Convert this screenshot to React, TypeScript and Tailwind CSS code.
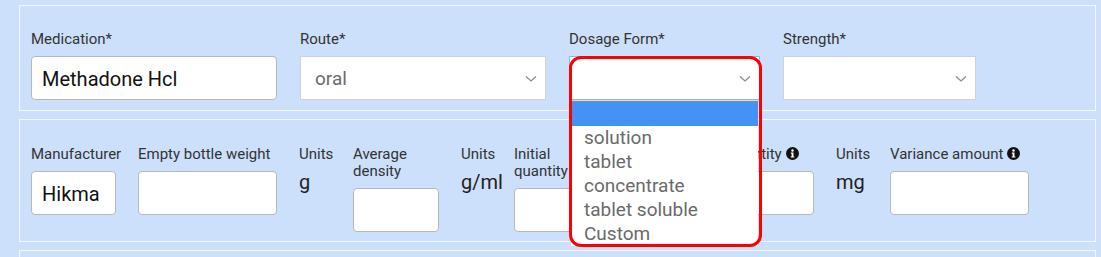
import React from "react";

const font = { fontFamily: "Roboto, 'Noto Sans', Arial, sans-serif" };

function Chevron() {
  return (
    <svg width="12" height="8" viewBox="0 0 12 8" className="shrink-0">
      <path d="M1 1.5 L6 6 L11 1.5" fill="none" stroke="#8a8a8a" strokeWidth="1.2" />
    </svg>
  );
}

function Info() {
  return (
    <svg width="13" height="13" viewBox="0 0 16 16" className="inline-block ml-[4px] align-[-1px]">
      <circle cx="8" cy="8" r="8" fill="#111" />
      <circle cx="8" cy="4.3" r="1.5" fill="#fff" />
      <path d="M6 6.8 H9.2 V11.6 H10.3 V13 H5.8 V11.6 H6.9 V8.2 H6 Z" fill="#fff" />
    </svg>
  );
}

function Label({ children, w }: { children: React.ReactNode; w?: string }) {
  return (
    <div className={`text-[15px] leading-[17px] text-[#333] mb-[8px] whitespace-nowrap ${w ?? ""}`}>{children}</div>
  );
}

function TextInput({ value, w }: { value?: string; w: string }) {
  return (
    <div
      className={`h-[44px] ${w} bg-white border border-[#b8b8b8] rounded-[4px] flex items-center pl-[10px] pt-[2px] text-[20px] text-[#111]`}
    >
      {value}
    </div>
  );
}

function Select({ value, w, focused }: { value?: string; w: string; focused?: boolean }) {
  return (
    <div
      className={`h-[44px] ${w} bg-white border ${
        focused ? "border-[#8ab8ee]" : "border-[#d2d2d2]"
      } flex items-center justify-between pl-[14px] pr-[8px] pt-[2px] text-[19px] text-[#6a6a6a]`}
    >
      <span>{value}</span>
      <Chevron />
    </div>
  );
}

function UnitValue({ v }: { v: string }) {
  return <div className="text-[20px] leading-[22px] text-[#222]">{v}</div>;
}

export default function App() {
  const options = ["solution", "tablet", "concentrate", "tablet soluble", "Custom"];
  return (
    <div
      className="w-[1101px] h-[257px] overflow-hidden bg-[#cde0fb] pl-[19px] pr-[5px] pt-[5px] flex flex-col gap-[8px]"
      style={font}
    >
      {/* Panel 1 */}
      <div className="border border-[#f2f7fe] pl-[11px] pt-[25px] pb-[10px] flex gap-[23px] shrink-0">
        <div>
          <Label>Medication*</Label>
          <TextInput value="Methadone Hcl" w="w-[246px]" />
        </div>
        <div>
          <Label>Route*</Label>
          <Select value="oral" w="w-[246px]" />
        </div>
        <div className="relative">
          <Label>Dosage Form*</Label>
          <Select w="w-[191px]" focused />
          <div className="absolute left-[2px] top-[70px] w-[187px] bg-white border-t border-[#8a8a8a] z-10">
            <div className="h-[24px] bg-[#4592f5]" />
            {options.map((o) => (
              <div key={o} className="h-[24px] leading-[24px] pl-[13px] text-[19px] text-[#6a6a6a]">
                {o}
              </div>
            ))}
          </div>
          <div className="absolute left-0 top-[25px] w-[193px] h-[191px] border-[3px] border-[#ff0000] rounded-[12px] z-20 pointer-events-none" />
        </div>
        <div>
          <Label>Strength*</Label>
          <Select w="w-[193px]" />
        </div>
      </div>

      {/* Panel 2 */}
      <div className="border border-[#f2f7fe] pl-[11px] pt-[26px] pb-[9px] flex shrink-0">
        <div className="w-[107px]">
          <Label>Manufacturer</Label>
          <TextInput value="Hikma" w="w-[85px]" />
        </div>
        <div className="w-[161px]">
          <Label>Empty bottle weight</Label>
          <TextInput w="w-[139px]" />
        </div>
        <div className="w-[54px]">
          <Label>Units</Label>
          <UnitValue v="g" />
        </div>
        <div className="w-[108px]">
          <Label>
            Average
            <br />
            density
          </Label>
          <TextInput w="w-[86px]" />
        </div>
        <div className="w-[53px]">
          <Label>Units</Label>
          <UnitValue v="g/ml" />
        </div>
        <div className="w-[161px]">
          <Label>
            Initial
            <br />
            quantity
          </Label>
          <TextInput w="w-[86px]" />
        </div>
        <div className="w-[161px]">
          <Label>
            Current quantity
            <Info />
          </Label>
          <TextInput w="w-[139px]" />
        </div>
        <div className="w-[54px]">
          <Label>Units</Label>
          <UnitValue v="mg" />
        </div>
        <div>
          <Label>
            Variance amount
            <Info />
          </Label>
          <TextInput w="w-[139px]" />
        </div>
      </div>

      {/* Panel 3 */}
      <div className="border border-[#f2f7fe] h-[40px] shrink-0" />
    </div>
  );
}
